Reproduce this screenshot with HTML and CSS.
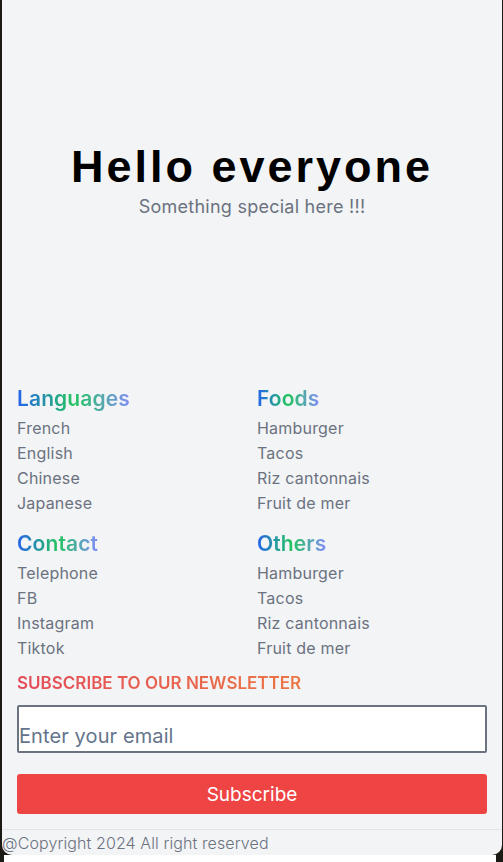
FILE: index.html
```html
<!DOCTYPE html>
<html lang="en">
<head>
<meta charset="utf-8">
<title>Hello everyone</title>
<link rel="stylesheet" href="styles.css">
</head>
<body>
<div class="window">
  <header class="hero">
    <h1 class="hero-title">Hello everyone</h1>
    <p class="hero-sub">Something special here !!!</p>
  </header>
  <main class="content">
    <div class="grid">
      <section class="group">
        <h2 class="grad-title">Languages</h2>
        <ul class="list">
          <li>French</li>
          <li>English</li>
          <li>Chinese</li>
          <li>Japanese</li>
        </ul>
      </section>
      <section class="group">
        <h2 class="grad-title">Foods</h2>
        <ul class="list">
          <li>Hamburger</li>
          <li>Tacos</li>
          <li>Riz cantonnais</li>
          <li>Fruit de mer</li>
        </ul>
      </section>
      <section class="group">
        <h2 class="grad-title">Contact</h2>
        <ul class="list">
          <li>Telephone</li>
          <li>FB</li>
          <li>Instagram</li>
          <li>Tiktok</li>
        </ul>
      </section>
      <section class="group">
        <h2 class="grad-title">Others</h2>
        <ul class="list">
          <li>Hamburger</li>
          <li>Tacos</li>
          <li>Riz cantonnais</li>
          <li>Fruit de mer</li>
        </ul>
      </section>
    </div>
    <form class="newsletter">
      <h3 class="news-title">SUBSCRIBE TO OUR NEWSLETTER</h3>
      <input class="email" type="email" placeholder="Enter your email">
      <button class="btn" type="button">Subscribe</button>
    </form>
  </main>
  <footer class="footer">@Copyright 2024 All right reserved</footer>
</div>
<div class="below"></div>
</body>
</html>
```
FILE: styles.css
```css
html {
  background: #1c1a14;
}
body {
  margin: 0;
  font-family: Inter, "Noto Sans", sans-serif;
}
.window {
  margin-left: 2px;
  width: 500px;
  height: 855px;
  background: #f3f4f6;
  border-radius: 0 0 10px 10px;
  display: flex;
  flex-direction: column;
  overflow: hidden;
}
.below {
  height: 7px;
  margin-left: 4px;
  width: 492px;
  background: #ffffff;
}
.hero {
  height: 366px;
  display: flex;
  flex-direction: column;
  align-items: center;
  justify-content: center;
}
.hero-title {
  margin: 0;
  font-family: "Liberation Sans", Arial, sans-serif;
  font-weight: 700;
  font-size: 45px;
  line-height: 48px;
  letter-spacing: 3px;
  color: #000;
}
.hero-sub {
  margin: 2px 0 0;
  font-size: 18px;
  line-height: 28px;
  letter-spacing: 0.25px;
  color: #6b7280;
}
.content {
  padding: 21px 15px 0;
}
.grid {
  display: grid;
  grid-template-columns: 240px 1fr;
  row-gap: 14px;
}
.grad-title {
  margin: 0 0 3px;
  display: inline-block;
  font-size: 21px;
  line-height: 28px;
  font-weight: 600;
  letter-spacing: 0.1px;
  background: linear-gradient(to right, #2563eb, #22c55e, #818cf8);
  -webkit-background-clip: text;
  background-clip: text;
  color: transparent;
}
.group {
  display: flex;
  flex-direction: column;
  align-items: flex-start;
}
.list {
  list-style: none;
  margin: 0;
  padding: 0;
}
.list li {
  font-size: 16px;
  line-height: 25px;
  letter-spacing: 0.2px;
  color: #6b7280;
}
.newsletter {
  display: flex;
  flex-direction: column;
  margin-top: 10px;
}
.news-title {
  margin: 0;
  align-self: flex-start;
  font-size: 17px;
  line-height: 24px;
  font-weight: 600;
  background: linear-gradient(to right, #e34a58, #ec7644);
  -webkit-background-clip: text;
  background-clip: text;
  color: transparent;
}
.email {
  margin-top: 10px;
  height: 48px;
  box-sizing: border-box;
  border: 2px solid #6b7280;
  border-radius: 2px;
  background: #fff;
  padding: 13px 0 0 0;
  font-family: Inter, "Noto Sans", sans-serif;
  font-size: 20px;
  letter-spacing: 0.1px;
  color: #334155;
  outline: none;
}
.email::placeholder {
  color: #64748b;
}
.btn {
  margin-top: 21px;
  height: 40px;
  border: none;
  border-radius: 3px;
  background: #ef4444;
  color: #fff;
  font-family: Inter, "Noto Sans", sans-serif;
  font-size: 19px;
  padding-top: 2px;
}
.footer {
  margin-top: 15px;
  border-top: 1px solid #e2e4e8;
  font-size: 16px;
  line-height: 24px;
  font-weight: 300;
  letter-spacing: 0.1px;
  color: #6b7280;
  padding-top: 1px;
}
```
